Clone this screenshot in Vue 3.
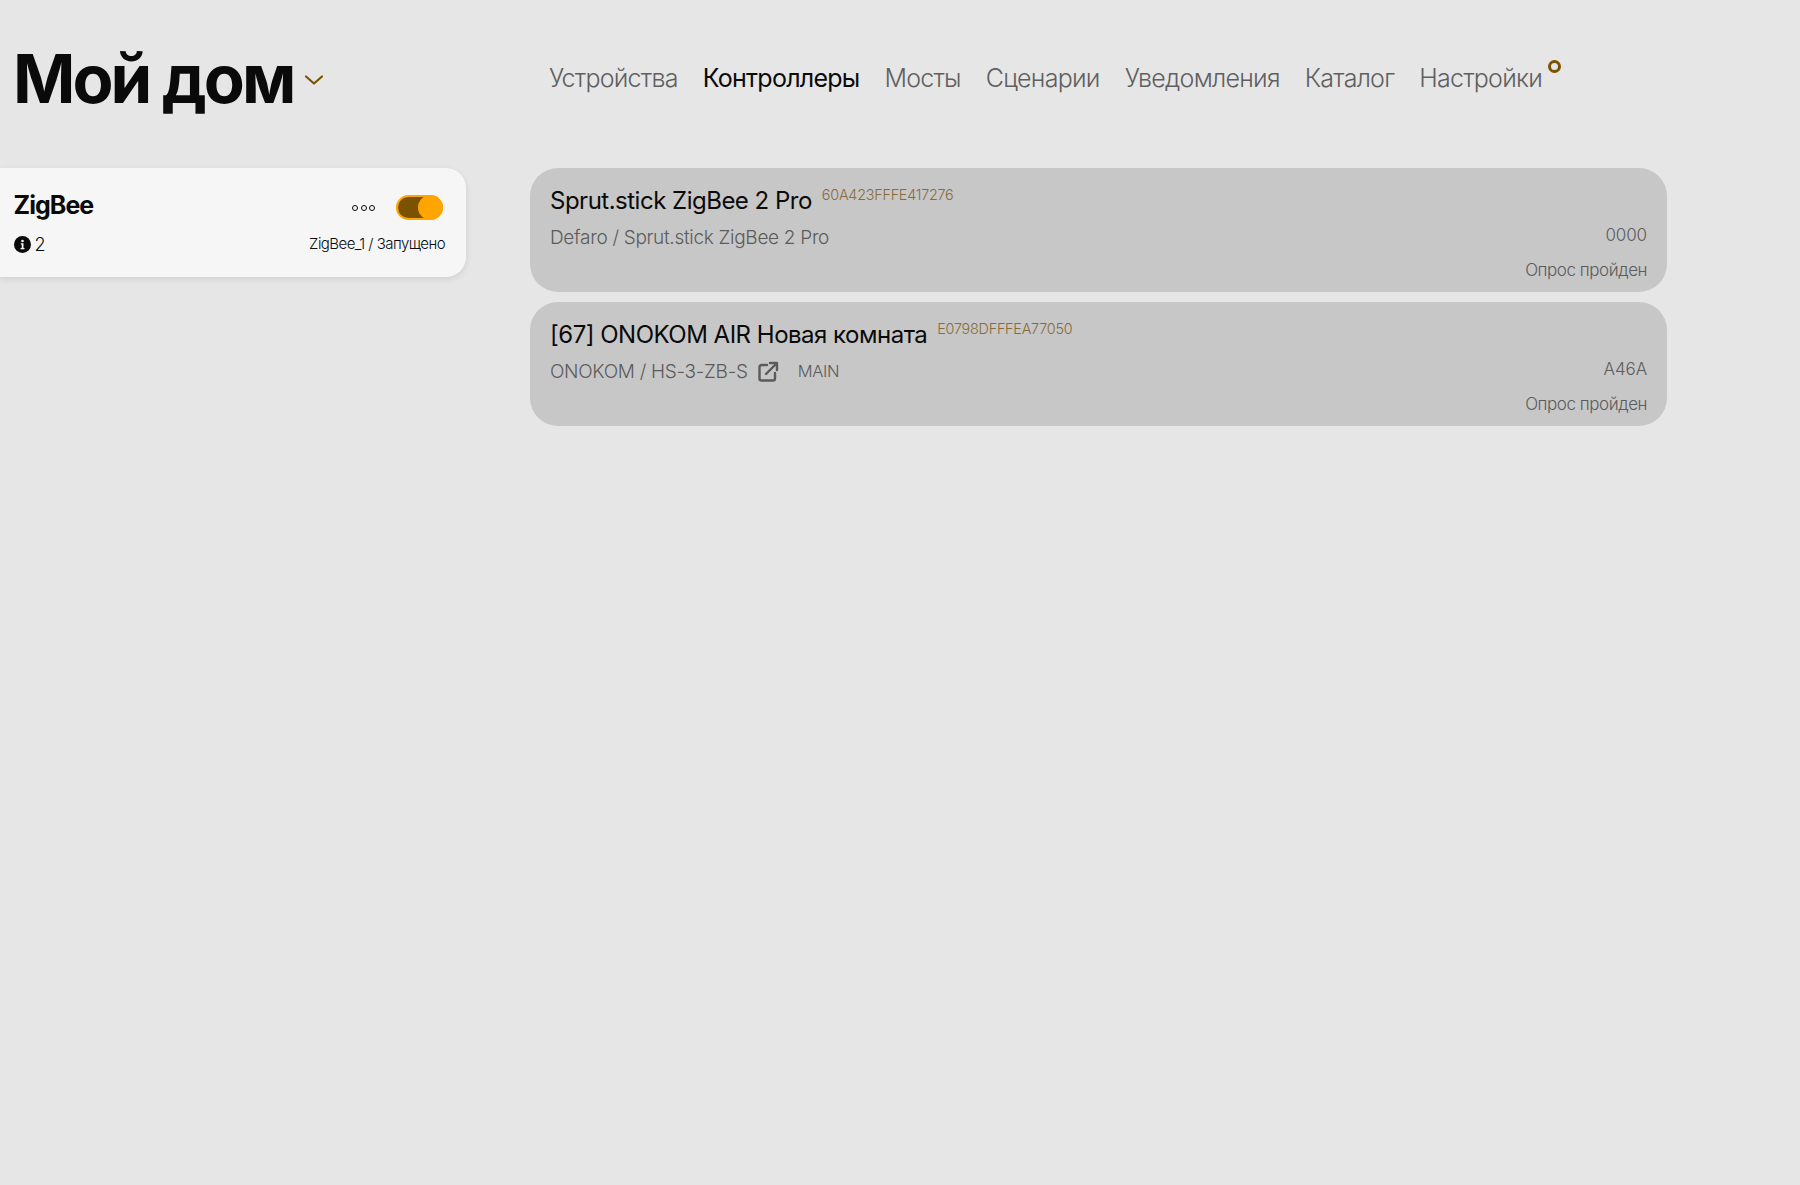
<script setup>
const nav = [
  { label: 'Устройства' },
  { label: 'Контроллеры', active: true },
  { label: 'Мосты' },
  { label: 'Сценарии' },
  { label: 'Уведомления' },
  { label: 'Каталог' },
  { label: 'Настройки', dot: true },
]
const devices = [
  { name: 'Sprut.stick ZigBee 2 Pro', ieee: '60A423FFFE417276', model: 'Defaro / Sprut.stick ZigBee 2 Pro', addr: '0000', status: 'Опрос пройден' },
  { name: '[67] ONOKOM AIR Новая комната', ieee: 'E0798DFFFEA77050', model: 'ONOKOM / HS-3-ZB-S', link: true, tag: 'MAIN', addr: 'A46A', status: 'Опрос пройден' },
]
</script>

<template>
  <div class="page">
    <header class="header">
      <div class="brand">
        <h1 class="title">Мой дом</h1>
        <svg class="chevron" width="20" height="12" viewBox="0 0 20 12" fill="none">
          <path d="M2 2.5l8 7 8-7" stroke="#7a5200" stroke-width="2.2" stroke-linecap="round" stroke-linejoin="round" />
        </svg>
      </div>
      <nav class="nav">
        <a v-for="item in nav" :key="item.label" class="nav-item" :class="{ active: item.active }">
          {{ item.label }}
          <span v-if="item.dot" class="nav-dot"></span>
        </a>
      </nav>
    </header>
    <main class="main">
      <aside class="sidebar">
        <section class="ctrl">
          <div class="ctrl-top">
            <span class="ctrl-name">ZigBee</span>
            <div class="ctrl-actions">
              <span class="dots"><i></i><i></i><i></i></span>
              <span class="toggle"><span class="knob"></span></span>
            </div>
          </div>
          <div class="ctrl-bottom">
            <span class="info">
              <svg width="17" height="17" viewBox="0 0 17 17">
                <circle cx="8.5" cy="8.5" r="8.5" fill="#0a0a0a" />
                <circle cx="8.5" cy="5" r="1.3" fill="#f6f6f6" />
                <path d="M6.8 7.3h2.7v4.6h1v1.3H6.6v-1.3h1.1V8.6h-.9z" fill="#f6f6f6" />
              </svg>
              2
            </span>
            <span class="ctrl-state">ZigBee_1 / Запущено</span>
          </div>
        </section>
      </aside>
      <section class="list">
        <article v-for="d in devices" :key="d.ieee" class="device">
          <div class="device-left">
            <div class="device-title">
              <span class="device-name">{{ d.name }}</span>
              <span class="device-ieee">{{ d.ieee }}</span>
            </div>
            <div class="device-model">
              <span>{{ d.model }}</span>
              <svg v-if="d.link" class="link" width="22" height="22" viewBox="0 0 22 22" fill="none">
                <path d="M10 4H4.500A2 2 0 0 0 2.500 6v11.500a2 2 0 0 0 2 2H16a2 2 0 0 0 2-2V12" stroke="#5b5b5b" stroke-width="2.400" stroke-linecap="round" />
                <path d="M9 13L19 3M13 2h7v7" stroke="#5b5b5b" stroke-width="2.400" stroke-linecap="round" stroke-linejoin="round" />
              </svg>
              <span v-if="d.tag" class="tag">{{ d.tag }}</span>
            </div>
          </div>
          <div class="device-right">
            <span class="addr">{{ d.addr }}</span>
            <span class="status">{{ d.status }}</span>
          </div>
        </article>
      </section>
    </main>
  </div>
</template>

<style>
html, body { margin: 0; background: #e6e6e6; overflow: hidden; }
</style>

<style scoped>
.page {
  width: 1800px;
  height: 1185px;
  background: #e6e6e6;
  font-family: Inter, "Noto Sans", sans-serif;
  color: #0a0a0a;
  overflow: hidden;
}
.header { display: flex; align-items: center; height: 168px; padding-left: 13px; box-sizing: border-box; padding-bottom: 12px; }
.brand { display: flex; align-items: center; width: 536px; flex: none; }
.title { margin: 0; font-size: 67px; font-weight: 700; letter-spacing: -3px; line-height: 1; }
.chevron { margin-left: 11px; margin-top: 4px; }
.nav { display: flex; gap: 25px; font-size: 25px; letter-spacing: -0.75px; margin-top: -1px; }
.nav-item { position: relative; color: #5f5f5f; font-weight: 300; }
.nav-item.active { color: #0a0a0a; font-weight: 400; }
.nav-dot { position: absolute; right: -19px; top: -3px; width: 7px; height: 7px; border: 3px solid #7a5200; border-radius: 50%; }
.main { display: flex; align-items: flex-start; }
.sidebar { width: 530px; flex: none; }
.ctrl {
  width: 466px;
  height: 109px;
  box-sizing: border-box;
  padding: 22px 21px 0 13.500px;
  background: #f6f6f6;
  border-radius: 0 20px 20px 0;
  box-shadow: 0 2px 6px rgba(0, 0, 0, 0.1);
}
.ctrl-top { display: flex; justify-content: space-between; align-items: center; height: 30px; }
.ctrl-name { font-size: 25px; font-weight: 700; letter-spacing: -0.95px; }
.ctrl-actions { display: flex; align-items: center; gap: 21px; margin-right: 2px; margin-top: 5px; }
.dots { display: flex; gap: 2.500px; }
.dots i { width: 4px; height: 4px; border: 1.500px solid #0a0a0a; border-radius: 50%; }
.toggle { display: block; width: 47px; height: 25px; box-sizing: border-box; background: #7a5200; border: 2px solid #ffa500; border-radius: 13px; position: relative; }
.knob { position: absolute; right: -2px; top: -2px; width: 25px; height: 25px; border-radius: 50%; background: #ffa500; }
.ctrl-bottom { display: flex; justify-content: space-between; align-items: center; margin-top: 14px; }
.info { display: flex; align-items: center; gap: 4px; font-size: 18px; font-weight: 300; }
.ctrl-state { font-size: 15px; font-weight: 300; letter-spacing: -0.55px; margin-top: -3px; }
.list { width: 1137px; display: flex; flex-direction: column; gap: 10px; }
.device {
  height: 124px;
  box-sizing: border-box;
  padding: 17px 20px 0;
  background: #c7c7c7;
  border-radius: 28px;
  display: flex;
  justify-content: space-between;
}
.device-title { display: flex; align-items: flex-start; gap: 10px; }
.device-name { font-size: 24px; font-weight: 400; letter-spacing: -0.5px; line-height: 31px; }
.device-ieee { font-size: 14.400px; font-weight: 300; color: #8a6a3a; letter-spacing: -0.25px; line-height: 19px; margin-top: 0; }
.device-model { display: flex; align-items: center; margin-top: 10px; font-size: 19px; font-weight: 300; color: #5b5b5b; letter-spacing: -0.3px; }
.link { margin-left: 9px; }
.tag { margin-left: 19px; font-size: 16.500px; margin-top: -1px; }
.device-right { display: flex; flex-direction: column; align-items: flex-end; color: #5b5b5b; font-weight: 300; padding-top: 40px; }
.addr { font-size: 17px; line-height: 21px; letter-spacing: -0.1px; }
.status { font-size: 17px; line-height: 21px; margin-top: 14px; letter-spacing: -0.45px; }
</style>
